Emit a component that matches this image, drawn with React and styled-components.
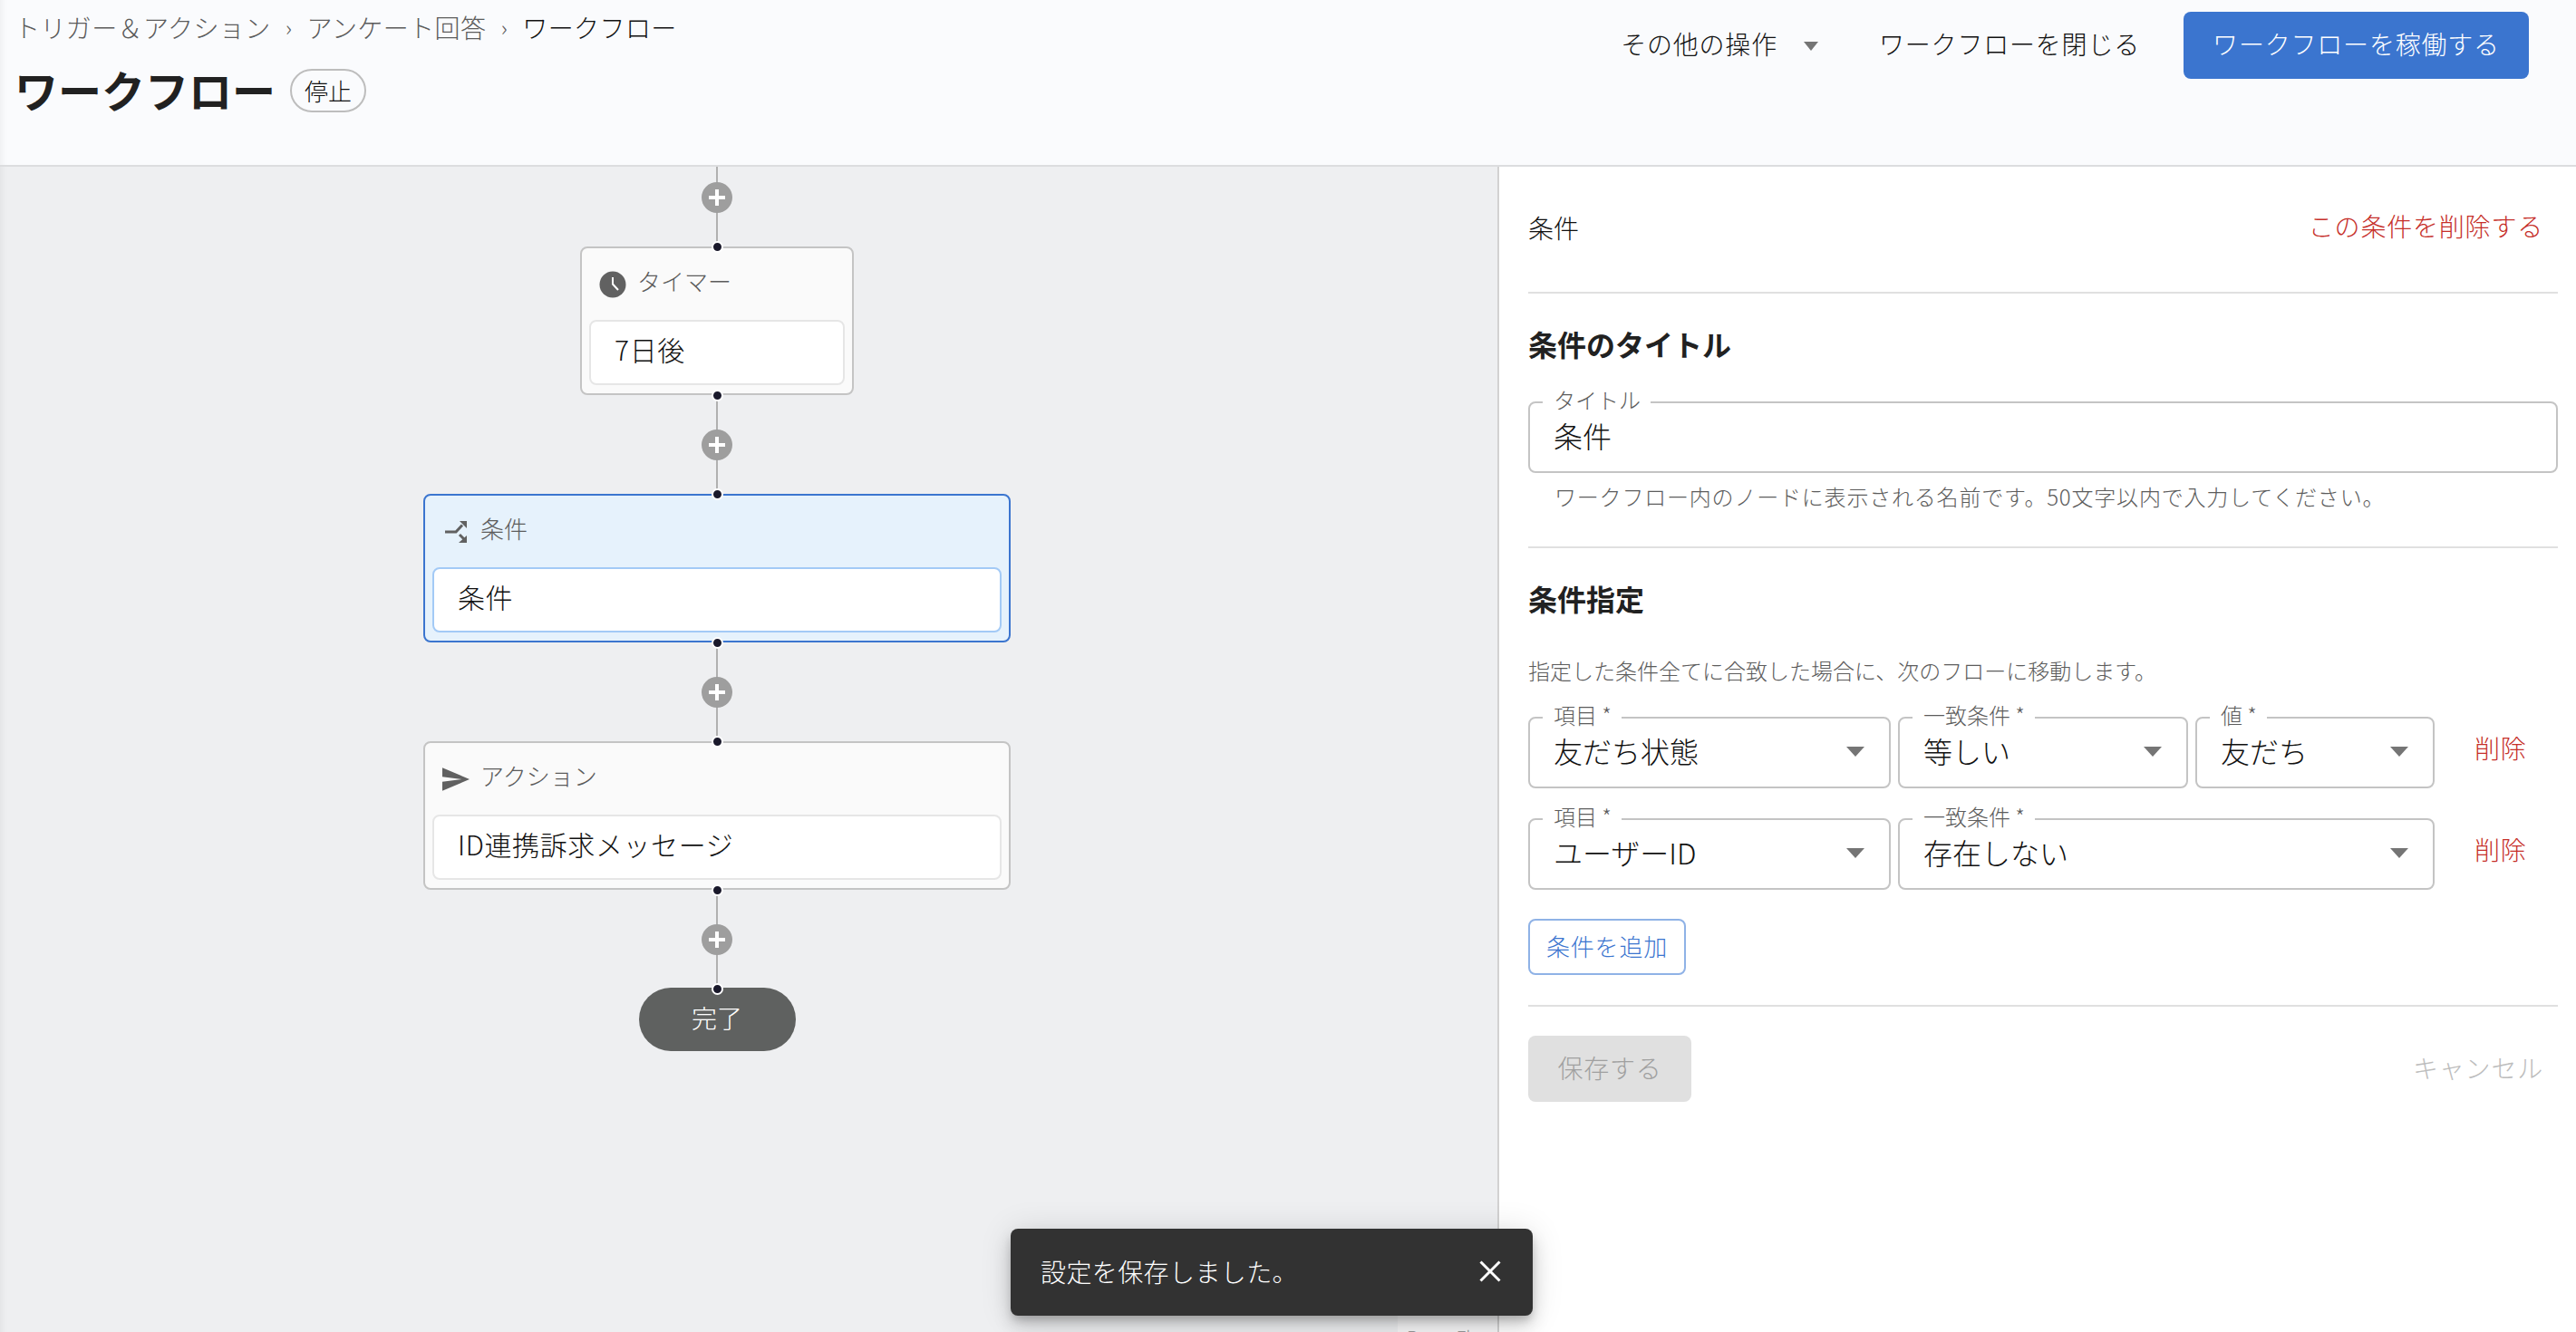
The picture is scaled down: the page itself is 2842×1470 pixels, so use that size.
import React from 'react'
import styled, { createGlobalStyle } from 'styled-components'

const GlobalStyle = createGlobalStyle`
  html, body {
    margin: 0;
    height: 100%;
    overflow: hidden;
    background: #ffffff;
    color: #111111;
    font-family: "Noto Sans CJK JP", "Noto Sans", sans-serif;
    font-weight: 300;
  }
  * {
    box-sizing: border-box;
  }
`

function ClockIcon() {
  return (
    <svg width="30" height="30" viewBox="0 0 30 30">
      <circle cx="15" cy="15" r="14.5" fill="#616161" />
      <path d="M15 7v7.5l6 6.5" fill="none" stroke="#ffffff" strokeWidth="2" />
    </svg>
  )
}

function ForkIcon() {
  return (
    <svg width="30" height="30" viewBox="0 0 30 30" fill="#616161">
      <path d="M3 15h12l7-7.5M19 18l5 5" fill="none" stroke="#616161" strokeWidth="3" />
      <path d="M19 3h8v8z" />
      <path d="M27 19v8h-9z" />
    </svg>
  )
}

function SendIcon() {
  return (
    <svg width="30" height="30" viewBox="2 1.5 21 21" fill="#616161">
      <path d="M2.01 21 23 12 2.01 3 2 10l15 2-15 2z" />
    </svg>
  )
}

function CloseIcon() {
  return (
    <svg width="24" height="24" viewBox="0 0 24 24">
      <path d="M1.5 1.5l21 21M22.5 1.5l-21 21" stroke="#ffffff" strokeWidth="3" />
    </svg>
  )
}

const Page = styled.div`
  position: relative;
  width: 2842px;
  height: 1470px;
  overflow: hidden;
`

const Header = styled.header`
  display: flex;
  justify-content: space-between;
  height: 184px;
  padding: 0 52px 0 16px;
  background: #fafbfd;
  border-bottom: 2px solid #dcdddf;
  box-shadow: inset 12px 0 10px -12px rgba(0, 0, 0, 0.08);
`

const TitleBlock = styled.div`
  display: flex;
  flex-direction: column;
`

const Breadcrumbs = styled.nav`
  display: flex;
  align-items: center;
  height: 36px;
  margin-top: 12px;
  font-size: 28px;
  line-height: 36px;
  letter-spacing: 0.4px;
`

const Crumb = styled.span`
  color: ${(p) => (p.$current ? '#111111' : '#5c5c5c')};
`

const CrumbSep = styled.span`
  width: 40px;
  text-align: center;
  font-size: 24px;
  color: #5c5c5c;
`

const TitleRow = styled.div`
  display: flex;
  align-items: center;
  gap: 14px;
  margin-top: 26px;
`

const Title = styled.h1`
  margin: 0;
  padding-bottom: 3px;
  font-size: 48px;
  line-height: 48px;
  font-weight: 700;
  color: #212121;
`

const StatusBadge = styled.span`
  display: flex;
  align-items: center;
  justify-content: center;
  width: 84px;
  height: 48px;
  margin-left: 2px;
  border: 2px solid #bdbdbd;
  border-radius: 24px;
  font-size: 26px;
  color: #111111;
`

const HeaderActions = styled.div`
  display: flex;
  align-items: center;
  height: 74px;
  margin-top: 13px;
`

const TextButton = styled.button`
  display: flex;
  align-items: center;
  padding: 0 0 4px;
  border: 0;
  background: none;
  font: inherit;
  font-size: 28px;
  letter-spacing: 0.8px;
  color: ${(p) => p.$color || '#111111'};
  white-space: nowrap;
`

const Caret = styled.span`
  flex: none;
  width: 0;
  height: 0;
  border-left: ${(p) => p.$w / 2}px solid transparent;
  border-right: ${(p) => p.$w / 2}px solid transparent;
  border-top: ${(p) => p.$h}px solid #757575;
`

const MoreCaret = styled(Caret)`
  margin: 2px 67px 0 29px;
`

const SelectCaret = styled(Caret)`
  margin-top: 3px;
`

const PrimaryButton = styled.button`
  width: 381px;
  height: 74px;
  margin-left: 48px;
  padding: 0 0 4px;
  border: 0;
  border-radius: 8px;
  background: #3b75cf;
  color: #ffffff;
  font: inherit;
  font-size: 28px;
  letter-spacing: 0.8px;
`

const Main = styled.main`
  display: flex;
  height: 1286px;
`

const Canvas = styled.section`
  position: relative;
  display: flex;
  flex-direction: column;
  align-items: center;
  flex: none;
  width: 1652px;
  padding-right: 70px;
  background: #eeeff1;
  box-shadow: inset 12px 0 10px -12px rgba(0, 0, 0, 0.08);
  overflow: hidden;
`

const Edge = styled.div`
  position: relative;
  display: flex;
  align-items: center;
  justify-content: center;
  flex: none;
  width: 34px;
  height: ${(p) => (p.$first ? 88 : 109)}px;
  padding-bottom: ${(p) => (p.$first ? 21 : 0)}px;
  &::before {
    content: "";
    position: absolute;
    top: 0;
    bottom: 0;
    left: 16px;
    width: 2px;
    background: #b0b0b0;
  }
`

const AddNode = styled.span`
  position: relative;
  display: flex;
  align-items: center;
  justify-content: center;
  width: 34px;
  height: 34px;
  border-radius: 50%;
  background: #9e9e9e;
  &::before, &::after {
    content: "";
    position: absolute;
    background: #ffffff;
  }
  &::before {
    width: 18px;
    height: 4px;
  }
  &::after {
    width: 4px;
    height: 18px;
  }
`

const Handle = styled.span`
  position: absolute;
  left: 50%;
  top: ${(p) => (p.$bottom ? 'auto' : '-8.5px')};
  bottom: ${(p) => (p.$bottom ? '-8.5px' : 'auto')};
  width: 13px;
  height: 13px;
  margin-left: -6.5px;
  border: 2px solid #ffffff;
  border-radius: 50%;
  background: #1a192b;
  z-index: 1;
`

const EndHandle = styled(Handle)`
  top: -5.5px;
`

const Node = styled.div`
  position: relative;
  display: flex;
  flex-direction: column;
  flex: none;
  width: ${(p) => (p.$wide ? 648 : 302)}px;
  height: 164px;
  padding: 0 8px 9px;
  border: 2px solid ${(p) => (p.$selected ? '#3b75cf' : '#c4c4c4')};
  border-radius: 8px;
  background: ${(p) => (p.$selected ? '#e6f2fc' : '#fafafa')};
`

const NodeHead = styled.div`
  display: flex;
  align-items: center;
  gap: 12px;
  flex: 1;
  padding-left: 11px;
  font-size: 26px;
  color: #5c5c5c;
`

const NodeHeadText = styled.span`
  margin-top: -9px;
`

const NodeBody = styled.div`
  display: flex;
  align-items: center;
  height: 72px;
  padding: 0 0 9px 26px;
  border: 2px solid ${(p) => (p.$selected ? '#a3caf6' : '#e6e6e6')};
  border-radius: 8px;
  background: #ffffff;
  font-size: 30px;
  letter-spacing: 0.6px;
  color: #111111;
`

const EndNode = styled.div`
  position: relative;
  display: flex;
  align-items: center;
  justify-content: center;
  flex: none;
  width: 173px;
  height: 70px;
  margin-top: -1px;
  padding-bottom: 4px;
  border-radius: 35px;
  background: #5f6160;
  color: #ffffff;
  font-size: 28px;
`

const Attribution = styled.div`
  position: absolute;
  right: 0;
  bottom: -14px;
  width: 110px;
  height: 36px;
  padding: 14px 0 0 10px;
  background: rgba(255, 255, 255, 0.5);
  font-size: 20px;
  line-height: 28px;
  color: #999999;
  white-space: nowrap;
`

const Panel = styled.aside`
  flex: 1;
  padding: 0 20px 0 32px;
  background: #ffffff;
  border-left: 2px solid #d2d2d2;
`

const PanelHead = styled.div`
  display: flex;
  align-items: center;
  justify-content: space-between;
  height: 138px;
  padding: 0 16px 4px 0;
  font-size: 28px;
  color: #111111;
`

const Divider = styled.hr`
  height: 2px;
  margin: ${(p) => p.$top || 0}px 0 0;
  border: 0;
  background: #e0e0e0;
`

const SectionTitle = styled.h2`
  margin: 33px 0 0;
  font-size: 32px;
  line-height: 44px;
  font-weight: 700;
  color: #212121;
`

const Outlined = styled.div`
  position: relative;
  display: flex;
  align-items: center;
  justify-content: space-between;
  flex: none;
  width: ${(p) => p.$width};
  height: 79px;
  margin-top: ${(p) => p.$top || 0}px;
  padding: 0 27px 6px 26px;
  border: 2px solid #c4c4c4;
  border-radius: 8px;
  font-size: 32px;
  color: #111111;
`

const FieldLabel = styled.label`
  position: absolute;
  top: -19px;
  left: 14px;
  padding: 0 11px 0 12px;
  background: #ffffff;
  font-size: 24px;
  line-height: 30px;
  color: #5c5c5c;
  white-space: nowrap;
`

const HelperText = styled.p`
  margin: 8px 0 37px 29px;
  font-size: 24px;
  line-height: 36px;
  letter-spacing: 0.8px;
  color: #5c5c5c;
`

const Description = styled.p`
  margin: 40px 0 33px;
  font-size: 24px;
  line-height: 36px;
  color: #5c5c5c;
`

const ConditionRow = styled.div`
  display: flex;
  gap: 8px;
  margin-bottom: 33px;
`

const RemoveLink = styled(TextButton)`
  height: 72px;
  margin-left: 36px;
`

const AddCondition = styled.button`
  display: block;
  width: 174px;
  height: 62px;
  margin-top: -1px;
  padding: 0 0 4px;
  border: 2px solid #8fb2e6;
  border-radius: 8px;
  background: #ffffff;
  color: #3b75cf;
  font: inherit;
  font-size: 26px;
  letter-spacing: 0.8px;
`

const PanelFoot = styled.div`
  display: flex;
  align-items: center;
  justify-content: space-between;
  margin-top: 32px;
  padding-right: 16px;
`

const SaveButton = styled.button`
  width: 180px;
  height: 73px;
  padding: 0 0 3px;
  border: 0;
  border-radius: 8px;
  background: #e0e0e0;
  color: #a0a0a0;
  font: inherit;
  font-size: 28px;
  letter-spacing: 0.8px;
`

const Toast = styled.div`
  position: absolute;
  left: 1115px;
  bottom: 18px;
  display: flex;
  align-items: center;
  justify-content: space-between;
  width: 576px;
  height: 96px;
  padding: 0 35px 3px 33px;
  border-radius: 8px;
  background: #323232;
  box-shadow: 0 6px 10px -2px rgba(0, 0, 0, 0.2), 0 12px 20px rgba(0, 0, 0, 0.14), 0 2px 36px rgba(0, 0, 0, 0.12);
  color: #ffffff;
  font-size: 28px;
  letter-spacing: 0.4px;
  z-index: 2;
`

const nodes = [
  { label: 'タイマー', value: '7日後', icon: <ClockIcon /> },
  { label: '条件', value: '条件', icon: <ForkIcon />, wide: true, selected: true },
  { label: 'アクション', value: 'ID連携訴求メッセージ', icon: <SendIcon />, wide: true },
]

const conditions = [
  [
    { label: '項目 *', value: '友だち状態', width: '400px' },
    { label: '一致条件 *', value: '等しい', width: '320px' },
    { label: '値 *', value: '友だち', width: '264px' },
  ],
  [
    { label: '項目 *', value: 'ユーザーID', width: '400px' },
    { label: '一致条件 *', value: '存在しない', width: '592px' },
  ],
]

export default function App() {
  return (
    <Page>
      <GlobalStyle />
      <Header>
        <TitleBlock>
          <Breadcrumbs>
            <Crumb>トリガー＆アクション</Crumb>
            <CrumbSep>›</CrumbSep>
            <Crumb>アンケート回答</Crumb>
            <CrumbSep>›</CrumbSep>
            <Crumb $current>ワークフロー</Crumb>
          </Breadcrumbs>
          <TitleRow>
            <Title>ワークフロー</Title>
            <StatusBadge>停止</StatusBadge>
          </TitleRow>
        </TitleBlock>
        <HeaderActions>
          <TextButton>その他の操作</TextButton>
          <MoreCaret $w={17} $h={10} />
          <TextButton>ワークフローを閉じる</TextButton>
          <PrimaryButton>ワークフローを稼働する</PrimaryButton>
        </HeaderActions>
      </Header>
      <Main>
        <Canvas>
          <Edge $first>
            <AddNode />
          </Edge>
          {nodes.map((node) => (
            <React.Fragment key={node.label}>
              <Node $wide={node.wide} $selected={node.selected}>
                <Handle />
                <NodeHead>
                  {node.icon}
                  <NodeHeadText>{node.label}</NodeHeadText>
                </NodeHead>
                <NodeBody $selected={node.selected}>{node.value}</NodeBody>
                <Handle $bottom />
              </Node>
              <Edge>
                <AddNode />
              </Edge>
            </React.Fragment>
          ))}
          <EndNode>
            <EndHandle />
            完了
          </EndNode>
          <Attribution>React Flow</Attribution>
        </Canvas>
        <Panel>
          <PanelHead>
            <span>条件</span>
            <TextButton $color="#c62f2a">この条件を削除する</TextButton>
          </PanelHead>
          <Divider />
          <SectionTitle>条件のタイトル</SectionTitle>
          <Outlined $width="100%" $top={42}>
            <FieldLabel>タイトル</FieldLabel>
            条件
          </Outlined>
          <HelperText>ワークフロー内のノードに表示される名前です。50文字以内で入力してください。</HelperText>
          <Divider />
          <SectionTitle>条件指定</SectionTitle>
          <Description>指定した条件全てに合致した場合に、次のフローに移動します。</Description>
          {conditions.map((row, i) => (
            <ConditionRow key={i}>
              {row.map((field) => (
                <Outlined key={field.label} $width={field.width}>
                  <FieldLabel>{field.label}</FieldLabel>
                  {field.value}
                  <SelectCaret $w={20} $h={11} />
                </Outlined>
              ))}
              <RemoveLink $color="#c62f2a">削除</RemoveLink>
            </ConditionRow>
          ))}
          <AddCondition>条件を追加</AddCondition>
          <Divider $top={33} />
          <PanelFoot>
            <SaveButton disabled>保存する</SaveButton>
            <TextButton $color="#bdbdbd">キャンセル</TextButton>
          </PanelFoot>
        </Panel>
      </Main>
      <Toast>
        設定を保存しました。
        <CloseIcon />
      </Toast>
    </Page>
  )
}
